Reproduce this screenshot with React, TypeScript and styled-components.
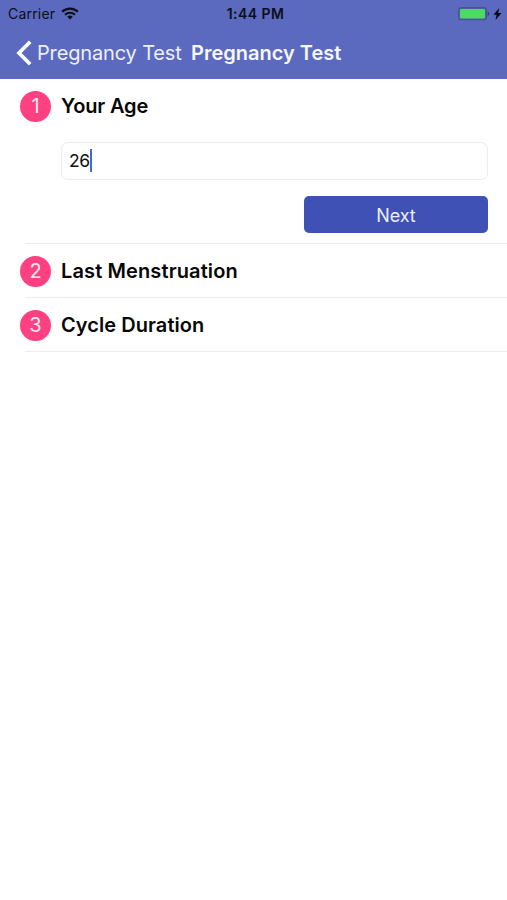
import React from "react";
import styled, { createGlobalStyle } from "styled-components";

const GlobalStyle = createGlobalStyle`
  * { box-sizing: border-box; }
  body {
    margin: 0;
    background: #fff;
    font-family: Inter, "Liberation Sans", sans-serif;
  }
`;

const Screen = styled.main`
  width: 507px;
  height: 900px;
  background: #fff;
  overflow: hidden;
`;

const Header = styled.header`
  height: 79px;
  background: #5b6abe;
`;

const StatusBar = styled.div`
  display: grid;
  grid-template-columns: 1fr auto 1fr;
  align-items: center;
  height: 27px;
  padding: 0 5px 0 8px;
  color: #0c0e1c;
`;

const Carrier = styled.div`
  display: flex;
  align-items: center;
  gap: 6px;
  font-size: 14px;
  letter-spacing: 0.2px;
`;

const Clock = styled.div`
  font-size: 14px;
  font-weight: 600;
  letter-spacing: 0.45px;
  padding-left: 1px;
`;

const Power = styled.div`
  display: flex;
  justify-content: flex-end;
  align-items: center;
  gap: 3px;
`;

const NavBar = styled.nav`
  display: flex;
  align-items: center;
  height: 51px;
  padding-left: 16px;
  color: #fff;
`;

const BackButton = styled.button`
  display: flex;
  align-items: center;
  gap: 4px;
  width: 175px;
  padding: 0;
  border: 0;
  background: none;
  color: #eef0fa;
  font: 400 20px Inter, sans-serif;
  letter-spacing: -0.15px;
  white-space: nowrap;
  flex: none;
`;

const Title = styled.h1`
  margin: 0;
  color: #f6f7fd;
  font-size: 20px;
  font-weight: 600;
  white-space: nowrap;
`;

const Step = styled.section<{ $height: number }>`
  height: ${(p) => p.$height}px;
  padding-left: 20px;
  background: linear-gradient(#ececee, #ececee) 25px 100% / 100% 1px no-repeat;
`;

const StepHeading = styled.div`
  display: flex;
  align-items: center;
  gap: 10px;
  height: 54px;
`;

const StepNumber = styled.span`
  display: flex;
  align-items: center;
  justify-content: center;
  width: 31px;
  height: 31px;
  border-radius: 50%;
  background: #ff4081;
  color: #ffeaf1;
  font-size: 20px;
`;

const StepTitle = styled.h2<{ $spacing?: number }>`
  margin: 0;
  color: #070707;
  font-size: 20px;
  font-weight: 600;
  letter-spacing: ${(p) => p.$spacing ?? 0}px;
`;

const StepBody = styled.div`
  display: flex;
  flex-direction: column;
  align-items: flex-end;
  gap: 16px;
  padding: 9px 19px 0 41px;
`;

const AgeField = styled.div`
  display: flex;
  align-items: center;
  width: 100%;
  height: 38px;
  padding: 0 0 1px 7px;
  border: 1px solid #ececec;
  border-radius: 7px;
  color: #111;
  font-size: 17.5px;
  letter-spacing: -0.5px;
`;

const Caret = styled.span`
  width: 2px;
  height: 23px;
  background: #4468d6;
`;

const NextButton = styled.button`
  width: 184px;
  height: 37px;
  padding: 1px 0 0;
  border: 0;
  border-radius: 5px;
  background: #3f51b5;
  color: #eceefa;
  font: 400 18px Inter, sans-serif;
  letter-spacing: -0.1px;
`;

const WifiIcon = () => (
  <svg width="18" height="13" viewBox="0 0 18 13" fill="none" stroke="#0c0e1c">
    <path d="M1.1 4.8a11.2 11.2 0 0 1 15.8 0" strokeWidth="2.3" />
    <path d="M4 7.8a7.1 7.1 0 0 1 10 0" strokeWidth="2.1" />
    <path d="M9 12.6 6.2 9.8a4 4 0 0 1 5.6 0Z" fill="#0c0e1c" stroke="none" />
  </svg>
);

const BatteryIcon = () => (
  <svg width="32" height="14" viewBox="0 0 32 14">
    <rect x="0.6" y="0.6" width="27.8" height="12.2" rx="2.8" fill="#5364a5" stroke="#465393" strokeWidth="1.1" />
    <rect x="2" y="2" width="25" height="9.5" rx="1.2" fill="#4cd964" />
    <path d="M29.7 4.6c2 .7 2 3.7 0 4.4Z" fill="#353e72" />
  </svg>
);

const BoltIcon = () => (
  <svg width="9" height="12" viewBox="0 0 9 12">
    <path d="M6.2 0 .5 6.8h3.1L2.5 12 8.5 5H5.2Z" fill="#080a14" />
  </svg>
);

const BackIcon = () => (
  <svg width="17" height="26" viewBox="0 0 17 26" fill="none">
    <path d="M14.2 1.8 3 13l11.2 11.2" stroke="#fff" strokeWidth="3.7" />
  </svg>
);

export default function App() {
  return (
    <Screen>
      <GlobalStyle />
      <Header>
        <StatusBar>
          <Carrier>
            Carrier
            <WifiIcon />
          </Carrier>
          <Clock>1:44 PM</Clock>
          <Power>
            <BatteryIcon />
            <BoltIcon />
          </Power>
        </StatusBar>
        <NavBar>
          <BackButton>
            <BackIcon />
            Pregnancy Test
          </BackButton>
          <Title>Pregnancy Test</Title>
        </NavBar>
      </Header>
      <Step $height={165}>
        <StepHeading>
          <StepNumber>1</StepNumber>
          <StepTitle $spacing={-0.15}>Your Age</StepTitle>
        </StepHeading>
        <StepBody>
          <AgeField>
            26
            <Caret />
          </AgeField>
          <NextButton>Next</NextButton>
        </StepBody>
      </Step>
      <Step $height={54}>
        <StepHeading>
          <StepNumber>2</StepNumber>
          <StepTitle $spacing={0.12}>Last Menstruation</StepTitle>
        </StepHeading>
      </Step>
      <Step $height={54}>
        <StepHeading>
          <StepNumber>3</StepNumber>
          <StepTitle $spacing={0.05}>Cycle Duration</StepTitle>
        </StepHeading>
      </Step>
    </Screen>
  );
}
